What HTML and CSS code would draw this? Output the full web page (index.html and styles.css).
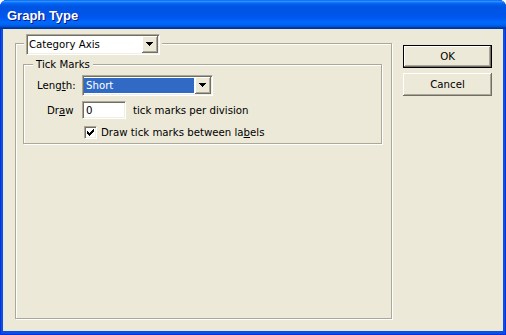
FILE: index.html
```html
<!DOCTYPE html>
<html>
	<head>
		<meta charset="UTF-8">
		<title>Graph Type</title>
		<link rel="stylesheet" href="styles.css">
	</head>
	<body>
		<div class="window">
			<div class="titlebar"><span class="title">Graph Type</span></div>
			<div class="client">
				<div class="group outer">
					<div class="legend-combo">
						<div class="combo combo-axis">
							<span class="combo-text">Category Axis</span>
							<span class="combo-btn">
								<svg width="7" height="4" viewBox="0 0 7 4" shape-rendering="crispEdges"><path d="M0 0h7v1h-1v1h-1v1h-1v1h-1v-1h-1v-1h-1v-1h-1z" fill="#000"/></svg>
							</span>
						</div>
					</div>
					<div class="group inner">
						<div class="legend-text">Tick Marks</div>
						<div class="row row-length">
							<span class="label label-length">Leng<u>t</u>h:</span>
							<div class="combo combo-len">
								<span class="combo-sel">Short</span>
								<span class="combo-btn">
									<svg width="7" height="4" viewBox="0 0 7 4" shape-rendering="crispEdges"><path d="M0 0h7v1h-1v1h-1v1h-1v1h-1v-1h-1v-1h-1v-1h-1z" fill="#000"/></svg>
								</span>
							</div>
						</div>
						<div class="row row-draw">
							<span class="label label-draw">Dr<u>a</u>w</span>
							<div class="field">0</div>
							<span class="after">tick marks per division</span>
						</div>
						<div class="row row-check">
							<span class="check">
								<svg width="7" height="7" viewBox="0 0 7 7" shape-rendering="crispEdges"><path d="M6 0h1v3h-1v1h-1v1h-1v1h-1v1h-1v-1h-1v-1h-1v-3h1v1h1v1h1v-1h1v-1h1z" fill="#000"/></svg>
							</span>
							<span class="check-label">Draw tick marks between la<u>b</u>els</span>
						</div>
					</div>
				</div>
				<div class="buttons">
					<button class="btn default">OK</button>
					<button class="btn">Cancel</button>
				</div>
			</div>
		</div>
	</body>
</html>
```

FILE: styles.css
```css
body {
	margin: 0;
	padding: 0;
	background: #fff;
}
.window {
	width: 506px;
	height: 335px;
	display: flex;
	flex-direction: column;
	background: #0a4fe6;
	border-radius: 7px 7px 0 0;
	overflow: hidden;
	box-shadow: inset 0 0 0 1px #0831d9;
	font-family: "DejaVu Sans", sans-serif;
	font-size: 10.2px;
	color: #000;
}
.titlebar {
	height: 29px;
	flex: none;
	display: flex;
	align-items: center;
	padding-left: 7px;
	background: linear-gradient(to bottom, #0058ee 0%, #3593ff 4%, #288eff 6%, #127dff 8%, #036ffc 10%, #0262ee 14%, #0057e5 20%, #0054e3 24%, #0055eb 56%, #005bf5 66%, #026afe 76%, #0062ef 86%, #0052d6 92%, #0040ab 94%, #003092 100%);
}
.title {
	font-family: "Liberation Sans", sans-serif;
	font-weight: bold;
	font-size: 13px;
	color: #fff;
	text-shadow: 1px 1px 0 #0a1883;
	margin-top: 1px;
}
.client {
	flex: 1;
	margin: 0 3px 4px 3px;
	background: #ece9d8;
	display: flex;
	align-items: flex-start;
	padding: 14px 0 0 12px;
}
.group {
	box-sizing: border-box;
	border: 1px solid #aca899;
	box-shadow: inset 1px 1px 0 #fff, 1px 1px 0 #fff;
}
.outer {
	width: 377px;
	height: 276px;
	padding: 0 7px 0 7px;
}
.legend-combo {
	display: flex;
	width: fit-content;
	margin: -10px 0 0 1px;
	padding: 0 2px;
	background: #ece9d8;
}
.combo {
	box-sizing: border-box;
	height: 21px;
	display: flex;
	align-items: stretch;
	background: #fff;
	border: 1px solid;
	border-color: #aca899 #fff #fff #aca899;
	box-shadow: inset 1px 1px 0 #716f64, inset -1px -1px 0 #f1efe2;
	padding: 1px;
}
.combo-axis {
	width: 134px;
}
.combo-text {
	flex: 1;
	display: flex;
	align-items: center;
	padding-left: 1px;
}
.combo-btn {
	width: 16px;
	flex: none;
	display: flex;
	align-items: center;
	justify-content: center;
	background: #ece9d8;
	box-shadow: inset -1px -1px 0 #716f64, inset 1px 1px 0 #fff, inset -2px -2px 0 #aca899;
}
.combo-btn svg {
	display: block;
	margin: 0 1px 1px 0;
}
.inner {
	width: 359px;
	height: 80px;
	margin-top: 9px;
}
.legend-text {
	display: table;
	margin: -7px 0 0 9px;
	padding: 0 3px;
	line-height: 13px;
	background: #ece9d8;
}
.row {
	display: flex;
	align-items: center;
}
.row-length {
	margin-top: 4px;
	padding-left: 13px;
}
.label-length {
	width: 45px;
}
.combo-len {
	width: 131px;
}
.combo-sel {
	flex: 1;
	display: flex;
	align-items: center;
	margin: 1px 1px 1px 0;
	padding-left: 2px;
	background: #316ac5;
	color: #fff;
}
.row-draw {
	margin-top: 5px;
	padding-left: 23px;
}
.label-draw {
	width: 35px;
}
.field {
	box-sizing: border-box;
	width: 44px;
	height: 18px;
	display: flex;
	align-items: center;
	padding-left: 3px;
	background: #fff;
	border: 1px solid;
	border-color: #aca899 #fff #fff #aca899;
	box-shadow: inset 1px 1px 0 #716f64, inset -1px -1px 0 #f1efe2;
}
.after {
	margin-left: 7px;
}
.row-check {
	margin-top: 7px;
	padding-left: 60px;
}
.check {
	box-sizing: border-box;
	width: 13px;
	height: 13px;
	display: flex;
	align-items: center;
	justify-content: center;
	background: #fff;
	border: 1px solid;
	border-color: #aca899 #fff #fff #aca899;
	box-shadow: inset 1px 1px 0 #716f64, inset -1px -1px 0 #f1efe2;
}
.check-label {
	margin-left: 4px;
}
.buttons {
	display: flex;
	flex-direction: column;
	gap: 5px;
	margin: 2px 0 0 11px;
}
.btn {
	width: 89px;
	height: 23px;
	padding: 0;
	border: none;
	background: #ece9d8;
	font-family: "DejaVu Sans", sans-serif;
	font-size: 10.2px;
	color: #000;
	box-shadow: inset -1px -1px 0 #716f64, inset 1px 1px 0 #fff, inset -2px -2px 0 #aca899;
}
.btn.default {
	box-shadow: inset 0 0 0 1px #000, inset -2px -2px 0 #716f64, inset 2px 2px 0 #fff, inset -3px -3px 0 #aca899;
}
```
